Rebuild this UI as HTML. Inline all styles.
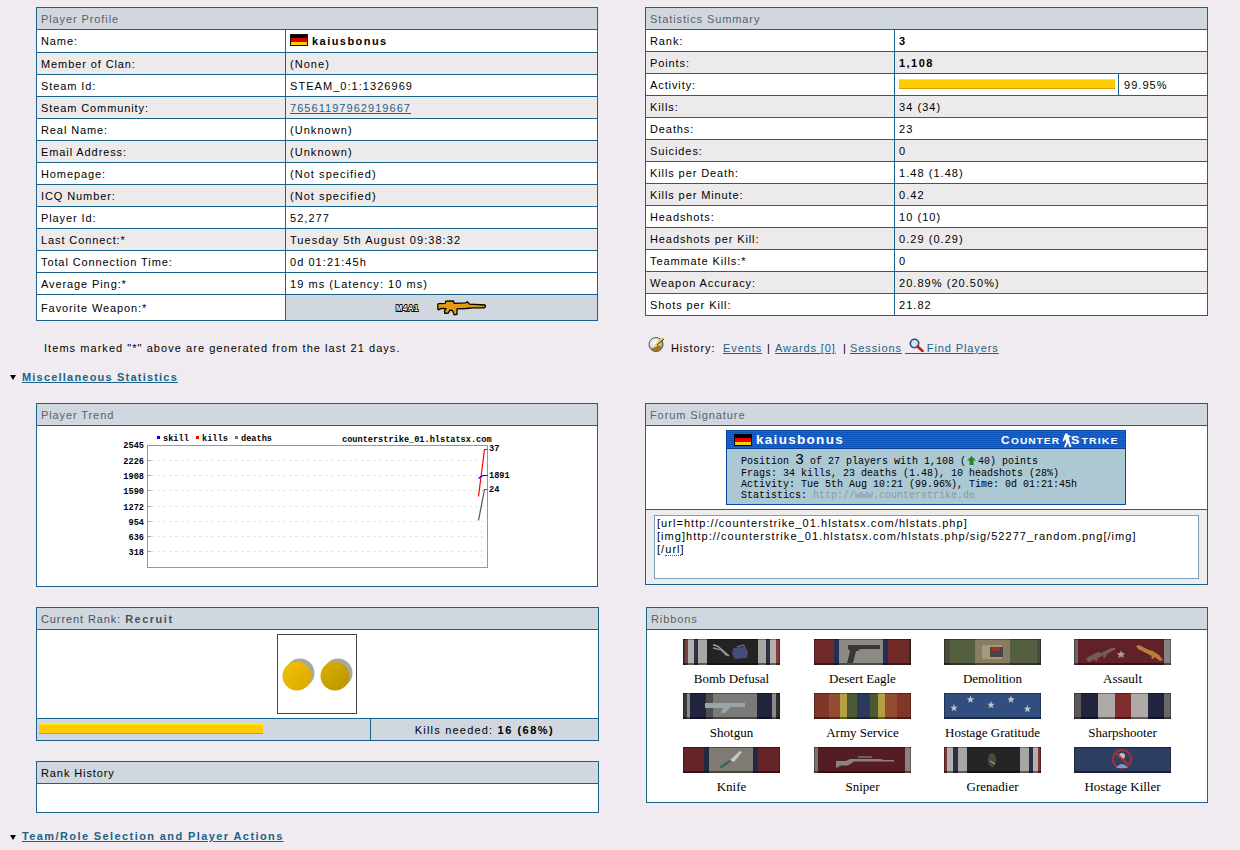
<!DOCTYPE html>
<html><head><meta charset="utf-8">
<style>
*{box-sizing:border-box;margin:0;padding:0}
html,body{width:1240px;height:850px;overflow:hidden}
body{background:#EFEBF0;font-family:"Liberation Sans",sans-serif;font-size:11px;color:#000;position:relative;letter-spacing:0.9px}
.p{position:absolute;border:1px solid #1B6288;background:#fff}
.hd{height:22px;background:#D0D7DE;color:#5A6168;padding-left:4px;padding-top:1px;line-height:21px;border-bottom:1px solid #1B6288}
.r{display:flex;border-bottom:1px solid #1B6288;line-height:21px;height:22px}
.r>div{padding-top:1px}
.r:last-child{border-bottom:0}
.g{background:#EDEAEC}
.c1{width:249px;border-right:1px solid #1B6288;padding-left:4px;flex:none}
.c2{flex:1;padding-left:4px;position:relative;letter-spacing:1.05px}
.rp .c1{width:249px}
a{color:#1B6288;text-decoration:underline}
b{font-weight:bold;letter-spacing:1.45px}
.abs{position:absolute;white-space:nowrap}
.tri{position:absolute;width:0;height:0;border-left:3.5px solid transparent;border-right:3.5px solid transparent;border-top:5px solid #000}
.ch{font-family:"Liberation Mono",monospace;font-weight:bold;font-size:8.6px;letter-spacing:0;line-height:10px;color:#000}
.yl{right:1096px;text-align:right}
.sig{background:#ACC9D3;border:1px solid #0D47A0;overflow:hidden}
.sigh{position:absolute;left:0;top:0;width:100%;height:18px;background:repeating-linear-gradient(#1766D6 0 1px,#0D55BE 1px 2px);border-bottom:1px solid #0A3F90}
.cslogo{color:#fff;font-weight:bold;font-size:12px;letter-spacing:0.3px;line-height:12px;font-style:normal}
.cslogo small{font-size:9px}
.sigt{font-family:"Liberation Mono",monospace;font-size:10px;letter-spacing:0;line-height:11px;color:#000}
.ta{background:#fff;border:1px solid #7F9DB9;font-size:11px;letter-spacing:1.05px;line-height:13px;padding:1px 0 0 2px}
.rib{position:absolute;width:97px;height:26px;box-shadow:inset 0 -2px 0 rgba(0,0,0,0.45),inset 0 1px 0 rgba(0,0,0,0.35),inset 1px 0 0 rgba(0,0,0,0.3),inset -1px 0 0 rgba(0,0,0,0.3)}
.rib svg{position:absolute;left:0;top:0}
.rib{filter:saturate(0.85)}
.rl{position:absolute;width:157px;text-align:center;font-family:"Liberation Serif",serif;font-size:13px;letter-spacing:0;line-height:15px;color:#000}
.sec{position:absolute;font-weight:bold;letter-spacing:1.2px;color:#1B6288;text-decoration:underline}
</style></head><body>

<!-- Player Profile -->
<div class="p" style="left:36px;top:7px;width:562px;height:314px">
  <div class="hd">Player Profile</div>
  <div class="r" style="height:23px;line-height:22px"><div class="c1" style="padding-top:0">Name:</div><div class="c2" style="padding-top:0"><span style="display:inline-block;width:18px;height:12px;vertical-align:-1px;margin-right:4px;background:linear-gradient(#000 0 33%,#D00 33% 66%,#FC0 66%);border:1px solid #111"></span><b>kaiusbonus</b></div></div>
  <div class="r g"><div class="c1">Member of Clan:</div><div class="c2">(None)</div></div>
  <div class="r"><div class="c1">Steam Id:</div><div class="c2">STEAM_0:1:1326969</div></div>
  <div class="r g"><div class="c1">Steam Community:</div><div class="c2"><a>76561197962919667</a></div></div>
  <div class="r"><div class="c1">Real Name:</div><div class="c2">(Unknown)</div></div>
  <div class="r g"><div class="c1">Email Address:</div><div class="c2">(Unknown)</div></div>
  <div class="r"><div class="c1">Homepage:</div><div class="c2">(Not specified)</div></div>
  <div class="r g"><div class="c1">ICQ Number:</div><div class="c2">(Not specified)</div></div>
  <div class="r"><div class="c1">Player Id:</div><div class="c2">52,277</div></div>
  <div class="r g"><div class="c1">Last Connect:*</div><div class="c2">Tuesday 5th August 09:38:32</div></div>
  <div class="r"><div class="c1">Total Connection Time:</div><div class="c2">0d 01:21:45h</div></div>
  <div class="r"><div class="c1">Average Ping:*</div><div class="c2">19 ms (Latency: 10 ms)</div></div>
  <div class="r" style="height:25px;line-height:25px"><div class="c1">Favorite Weapon:*</div><div class="c2" style="background:#D0D7DE;padding-top:0"><svg style="position:absolute;left:108px;top:0" width="30" height="22" viewBox="0 0 30 22"><text x="2" y="16" font-family="Liberation Sans" font-weight="bold" font-size="9.5" textLength="23" lengthAdjust="spacingAndGlyphs" fill="#fff" stroke="#000" stroke-width="2.2" paint-order="stroke" stroke-linejoin="round">M4A1</text></svg><svg style="position:absolute;left:148px;top:1px" width="56" height="24" viewBox="0 0 56 24"><path d="M3.8 8.3 L4.4 7.6 L11.2 7.4 L11.8 5.1 L19.4 4.9 L20.4 7.4 L31.6 6.9 L33.4 5.7 L35.4 8.1 L51 9 L51.4 10.4 L50.6 11.8 L39.3 11.8 L31.6 12.5 L23 12.9 L23 18.4 L20.2 18.8 L18.3 14.5 L15.9 14.1 L14.4 17 L10.8 17.4 L10.4 15.4 L12 12.6 L6.8 12.5 L4.6 13.9 L3.8 13 Z" fill="#E39A10" stroke="#000" stroke-width="1.3" stroke-linejoin="round"/></svg></div></div>
</div>

<!-- Statistics Summary -->
<div class="p rp" style="left:645px;top:7px;width:563px;height:309px">
  <div class="hd">Statistics Summary</div>
  <div class="r"><div class="c1">Rank:</div><div class="c2"><b>3</b></div></div>
  <div class="r g"><div class="c1">Points:</div><div class="c2"><b>1,108</b></div></div>
  <div class="r"><div class="c1">Activity:</div><div class="c2" style="padding:0;display:flex"><div style="width:224px;border-right:1px solid #1B6288;position:relative"><div style="position:absolute;left:4px;top:5px;width:216px;height:10px;background:linear-gradient(#FFEC00 0 1px,#FFCC00 1px);border-bottom:1px solid #D9A000"></div></div><div style="padding-left:5px;padding-top:1px">99.95%</div></div></div>
  <div class="r g"><div class="c1">Kills:</div><div class="c2">34 (34)</div></div>
  <div class="r"><div class="c1">Deaths:</div><div class="c2">23</div></div>
  <div class="r g"><div class="c1">Suicides:</div><div class="c2">0</div></div>
  <div class="r"><div class="c1">Kills per Death:</div><div class="c2">1.48 (1.48)</div></div>
  <div class="r g"><div class="c1">Kills per Minute:</div><div class="c2">0.42</div></div>
  <div class="r"><div class="c1">Headshots:</div><div class="c2">10 (10)</div></div>
  <div class="r g"><div class="c1">Headshots per Kill:</div><div class="c2">0.29 (0.29)</div></div>
  <div class="r"><div class="c1">Teammate Kills:*</div><div class="c2">0</div></div>
  <div class="r g"><div class="c1">Weapon Accuracy:</div><div class="c2">20.89% (20.50%)</div></div>
  <div class="r"><div class="c1">Shots per Kill:</div><div class="c2">21.82</div></div>
</div>

<div class="abs" style="left:44px;top:342px;letter-spacing:1.05px">Items marked "*" above are generated from the last 21 days.</div>

<svg class="abs" style="left:648px;top:336px" width="17" height="16" viewBox="0 0 17 16">
  <defs><radialGradient id="hg" cx="0.4" cy="0.35" r="0.7"><stop offset="0" stop-color="#fff"/><stop offset="0.5" stop-color="#ddd"/><stop offset="1" stop-color="#777"/></radialGradient></defs>
  <circle cx="8" cy="8.5" r="7" fill="url(#hg)" stroke="#333" stroke-width="0.8"/>
  <path d="M3 13 a7 7 0 0 0 11 -1 l-3 -3 z" fill="#A07820"/>
  <path d="M7 10 L15 2" stroke="#F0D020" stroke-width="2"/>
  <path d="M9 9 L16 3" stroke="#222" stroke-width="1"/>
</svg>
<div class="abs" style="left:671px;top:342px">History:</div>
<div class="abs" style="left:723px;top:342px"><a>Events</a></div>
<div class="abs" style="left:767px;top:342px">|</div>
<div class="abs" style="left:775px;top:342px"><a>Awards [0]</a></div>
<div class="abs" style="left:843px;top:342px">|</div>
<div class="abs" style="left:850px;top:342px"><a>Sessions</a></div>
<div class="abs" style="left:905px;top:342px"><a><span style="letter-spacing:1.3px">&nbsp;&nbsp;&nbsp;&nbsp;&nbsp;</span>Find Players</a></div>
<svg class="abs" style="left:909px;top:338px" width="15" height="14" viewBox="0 0 15 14">
  <circle cx="5.5" cy="5.5" r="4.2" fill="#CFE6F5" stroke="#2A4A8A" stroke-width="1.6"/>
  <path d="M8.5 8.5 L13.5 13" stroke="#C02020" stroke-width="2.8" stroke-linecap="round"/>
</svg>

<div class="tri" style="left:10px;top:375px"></div>
<div class="sec" style="left:22px;top:371px">Miscellaneous Statistics</div>

<!-- Player Trend -->
<div class="p" style="left:36px;top:403px;width:562px;height:184px">
  <div class="hd">Player Trend</div>
</div>

<!-- chart -->
<svg class="abs" style="left:0;top:0" width="600" height="600" viewBox="0 0 600 600">
  <g stroke="#E6E6E6" stroke-width="1" stroke-dasharray="3,3">
    <line x1="151" y1="460.5" x2="487" y2="460.5"/>
    <line x1="151" y1="475.5" x2="487" y2="475.5"/>
    <line x1="151" y1="490.5" x2="487" y2="490.5"/>
    <line x1="151" y1="506.5" x2="487" y2="506.5"/>
    <line x1="151" y1="521.5" x2="487" y2="521.5"/>
    <line x1="151" y1="536.5" x2="487" y2="536.5"/>
    <line x1="151" y1="551.5" x2="487" y2="551.5"/>
    <line x1="481.5" y1="525" x2="481.5" y2="567"/>
  </g>
  <g stroke="#9AA5A5" stroke-width="1">
    <line x1="147" y1="460.5" x2="151" y2="460.5"/>
    <line x1="147" y1="475.5" x2="151" y2="475.5"/>
    <line x1="147" y1="490.5" x2="151" y2="490.5"/>
    <line x1="147" y1="506.5" x2="151" y2="506.5"/>
    <line x1="147" y1="521.5" x2="151" y2="521.5"/>
    <line x1="147" y1="536.5" x2="151" y2="536.5"/>
    <line x1="147" y1="551.5" x2="151" y2="551.5"/>
  </g>
  <rect x="147.5" y="445.5" width="340" height="122" fill="none" stroke="#8E9B9B"/>
  <polyline points="478.5,496.5 484.5,449.5 487.5,449.5" fill="none" stroke="#FF0000" stroke-width="1.2"/>
  <polyline points="478.5,478.5 481,476.5 483.5,475.5 487.5,475.5" fill="none" stroke="#0000FF" stroke-width="1.2"/>
  <polyline points="478.5,520.5 484.5,489.5 487.5,489.5" fill="none" stroke="#555" stroke-width="1.2"/>
  <rect x="157" y="436" width="3" height="3" fill="#0000FF"/>
  <rect x="196" y="436" width="3" height="3" fill="#FF0000"/>
  <rect x="235" y="436" width="3" height="3" fill="#777"/>
</svg>
<div class="abs ch" style="left:163px;top:434px">skill</div>
<div class="abs ch" style="left:202px;top:434px">kills</div>
<div class="abs ch" style="left:241px;top:434px">deaths</div>
<div class="abs ch" style="left:342px;top:435px">counterstrike_01.hlstatsx.com</div>
<div class="abs ch yl" style="top:441px">2545</div>
<div class="abs ch yl" style="top:457px">2226</div>
<div class="abs ch yl" style="top:472px">1908</div>
<div class="abs ch yl" style="top:487px">1590</div>
<div class="abs ch yl" style="top:503px">1272</div>
<div class="abs ch yl" style="top:518px">954</div>
<div class="abs ch yl" style="top:533px">636</div>
<div class="abs ch yl" style="top:548px">318</div>
<div class="abs ch" style="left:489px;top:444px">37</div>
<div class="abs ch" style="left:489px;top:471px">1891</div>
<div class="abs ch" style="left:489px;top:485px">24</div>

<!-- Forum Signature -->
<div class="p" style="left:645px;top:403px;width:563px;height:182px">
  <div class="hd">Forum Signature</div>
  <div style="height:84px;border-bottom:1px solid #1B6288;background:#fff"></div>
  <div style="height:74px;background:#EDEDED"></div>
</div>
<div class="abs sig" style="left:726px;top:430px;width:400px;height:75px">
  <div class="sigh"></div>
  <span style="position:absolute;left:7px;top:3px;width:18px;height:12px;background:linear-gradient(#000 0 33%,#E00 33% 66%,#FC0 66%);border:1px solid #000"></span>
  <div class="abs" style="left:29px;top:0px;color:#fff;font-weight:bold;font-size:13.5px;letter-spacing:1.3px;line-height:18px">kaiusbonus</div>
  <svg class="abs" style="left:274px;top:0.5px" width="122" height="17" viewBox="0 0 122 17">
    <g fill="#fff" font-family="Liberation Sans" font-weight="bold">
      <text x="0" y="11.5" font-size="10.5" textLength="9.5" lengthAdjust="spacingAndGlyphs">C</text>
      <text x="10" y="11.5" font-size="9" textLength="49" lengthAdjust="spacingAndGlyphs">OUNTER</text>
      <text x="70" y="11.5" font-size="10.5" textLength="9.5" lengthAdjust="spacingAndGlyphs">S</text>
      <text x="80.5" y="11.5" font-size="9" textLength="37" lengthAdjust="spacingAndGlyphs">TRIKE</text>
    </g>
    <path d="M64 2 l2 -1 l1 2 l4 1.5 l-3 0.5 l0.5 4 l2 6 l-2 0 l-1.5 -4 l-2.5 4.5 l-1.5 -0.5 l2 -5 l-0.5 -3 l-2 2.5 l-1 -0.5 z" fill="#fff"/>
  </svg>
  <div class="abs sigt" style="left:14px;top:24px">Position <span style="font-size:15px;letter-spacing:0">3</span> of 27 players with 1,108 (<svg style="display:inline-block;vertical-align:-1px;margin:0 2px 0 1px" width="9" height="9" viewBox="0 0 9 9"><path d="M4.5 0 L9 4.5 L6.5 4.5 L6.5 9 L2.5 9 L2.5 4.5 L0 4.5 Z" fill="#1E8A1E"/></svg>40) points</div>
  <div class="abs sigt" style="left:14px;top:37px">Frags: 34 kills, 23 deaths (1.48), 10 headshots (28%)</div>
  <div class="abs sigt" style="left:14px;top:48px">Activity: Tue 5th Aug 10:21 (99.96%), Time: 0d 01:21:45h</div>
  <div class="abs sigt" style="left:14px;top:59px">Statistics: <span style="color:#8A9AA0">http://www.counterstrike.de</span></div>
</div>
<div class="abs ta" style="left:654px;top:515px;width:545px;height:64px">[url=http://counterstrike_01.hlstatsx.com/hlstats.php]<br>[img]http://counterstrike_01.hlstatsx.com/hlstats.php/sig/52277_random.png[/img]<br>[/<span style="border-bottom:1px dotted #E02020">url</span>]</div>

<!-- Current Rank -->
<div class="p" style="left:36px;top:607px;width:563px;height:134px">
  <div class="hd" style="color:#4A5158">Current Rank: <b style="letter-spacing:1.5px">Recruit</b></div>
  <div style="height:89px;border-bottom:1px solid #1B6288;background:#fff;position:relative">
    <div style="position:absolute;left:240px;top:4px;width:80px;height:80px;border:1px solid #444;background:#fff"></div>
  </div>
  <div style="height:21px;background:#D0D7DE;display:flex">
    <div style="width:334px;border-right:1px solid #1B6288;position:relative"><div style="position:absolute;left:2px;top:5px;width:224px;height:10px;background:linear-gradient(#FFEC00 0 1px,#FFCC00 1px);border-bottom:1px solid #D9A000"></div></div>
    <div style="flex:1;text-align:center;line-height:21px;padding-top:1px;letter-spacing:1.2px">Kills needed: <b style="letter-spacing:1.5px">16 (68%)</b></div>
  </div>
</div>
<svg class="abs" style="left:277px;top:634px" width="80" height="80" viewBox="0 0 80 80">
  <defs>
    <linearGradient id="cg1" x1="0" y1="0" x2="1" y2="1"><stop offset="0" stop-color="#F2C200"/><stop offset="1" stop-color="#D9A800"/></linearGradient>
    <linearGradient id="cg2" x1="0" y1="0" x2="1" y2="1"><stop offset="0" stop-color="#D8B000"/><stop offset="1" stop-color="#B89400"/></linearGradient>
  </defs>
  <circle cx="23" cy="39" r="14.5" fill="#8A8A8E" opacity="0.75"/>
  <circle cx="20" cy="42" r="14.5" fill="url(#cg1)"/>
  <circle cx="61" cy="39" r="14.5" fill="#8A8A8E" opacity="0.75"/>
  <circle cx="58" cy="42" r="14.5" fill="url(#cg2)"/>
</svg>

<!-- Ribbons -->
<div class="p" style="left:646px;top:607px;width:562px;height:196px">
  <div class="hd">Ribbons</div>
</div>
<div class="rib" style="left:683px;top:639px;background:linear-gradient(90deg,#3a3434 0% 2%,#8a3a3a 2% 5%,#b4b0ae 5% 11%,#2c3048 11% 15%,#a8a6a4 15% 25%,#242222 25% 77%,#a8a6a4 77% 86%,#2c3048 86% 90%,#b4b0ae 90% 96%,#8a3a3a 96% 100%)"><svg width="97" height="26" viewBox="0 0 97 26"><path d="M30 6 q4 0 8 4 l8 7" stroke="#a0a0a8" stroke-width="1.6" fill="none"/><path d="M30 9 q5 1 8 2 l6 6" stroke="#8a8a92" stroke-width="1.3" fill="none"/><path d="M50 9 l12 -1 l3 4 l-1 7 l-12 1 l-3 -5 z" fill="#3e4e7a"/><path d="M54 8 l6 -2 l2 2" stroke="#5a6a92" stroke-width="1.5" fill="none"/></svg></div>
<div class="rl" style="left:653px;top:671px">Bomb Defusal</div>
<div class="rib" style="left:814px;top:639px;background:linear-gradient(90deg,#7a2626 0% 21%,#1f2f5e 21% 26%,#8e8a84 26% 71%,#1f2f5e 71% 76%,#7a2626 76% 98%,#3a2a2a 98% 100%)"><svg width="97" height="26" viewBox="0 0 97 26"><path d="M34 6 h32 v4 h-20 l-2 2 h-2 l-3 12 h-6 l3 -12 l-2 -2 z" fill="#3a3836"/></svg></div>
<div class="rl" style="left:784px;top:671px">Desert Eagle</div>
<div class="rib" style="left:944px;top:639px;background:linear-gradient(90deg,#4a4a3c 0% 6%,#53603a 6% 32%,#8a7c5e 32% 68%,#53603a 68% 96%,#4a4a3c 96% 100%)"><svg width="97" height="26" viewBox="0 0 97 26"><rect x="38" y="6" width="20" height="14" fill="#a89878"/><rect x="46" y="8" width="13" height="10" fill="#4a4448"/><rect x="48" y="8" width="8" height="4" fill="#a03030"/></svg></div>
<div class="rl" style="left:914px;top:671px">Demolition</div>
<div class="rib" style="left:1074px;top:639px;background:linear-gradient(90deg,#6e6464 0% 4%,#6a1f28 4% 93%,#8a8282 93% 100%)"><svg width="97" height="26" viewBox="0 0 97 26"><path d="M12 21 l2 -3 l10 -5 l3 1 l10 -5 l4 0 l1 1 l-9 5 l-2 4 l-2 0 l1 -3 l-6 3 l-1 3 l-2 0 l0 -2 l-6 3 z" fill="#7a5a52"/><path d="M47 11.5 l1.3 2.6 l2.9 0.2 l-2.2 1.9 l0.8 2.8 l-2.8 -1.6 l-2.8 1.6 l0.8 -2.8 l-2.2 -1.9 l2.9 -0.2 z" fill="#a898a0"/><path d="M62 7 l3 -1 l10 5 l4 1 l6 4 l4 5 l-3 1 l-5 -4 l-2 2 l-2 -1 l1 -2 l-4 -2 l-10 -5 z" fill="#c8782a"/></svg></div>
<div class="rl" style="left:1044px;top:671px">Assault</div>
<div class="rib" style="left:683px;top:693px;background:linear-gradient(90deg,#3a3a3e 0% 4%,#8a8a8a 4% 7%,#1f2440 7% 24%,#4e4e52 24% 31%,#7c7a78 31% 76%,#1f2440 76% 92%,#8a8a8a 92% 96%,#2e2e32 96% 100%)"><svg width="97" height="26" viewBox="0 0 97 26"><path d="M22 10 h40 v4 h-14 l-6 6 h-4 l2 -5 h-18 z" fill="#9aa4a8"/></svg></div>
<div class="rl" style="left:653px;top:725px">Shotgun</div>
<div class="rib" style="left:814px;top:693px;background:linear-gradient(90deg,#8a3424 0% 15%,#a04a2c 15% 27%,#b8a034 27% 34%,#4a5a30 34% 44%,#283a62 44% 58%,#4a5a30 58% 66%,#b8a034 66% 73%,#a04a2c 73% 86%,#8a3424 86% 100%)"><svg width="97" height="26" viewBox="0 0 97 26"></svg></div>
<div class="rl" style="left:784px;top:725px">Army Service</div>
<div class="rib" style="left:944px;top:693px;background:linear-gradient(90deg,#2e4e88 0% 100%)"><svg width="97" height="26" viewBox="0 0 97 26"><g fill="#c0c4cc"><polygon points="26.50,2.60 27.46,5.17 30.21,5.29 28.06,7.01 28.79,9.66 26.50,8.14 24.21,9.66 24.94,7.01 22.79,5.29 25.54,5.17"/><polygon points="10.00,11.10 10.96,13.67 13.71,13.79 11.56,15.51 12.29,18.16 10.00,16.64 7.71,18.16 8.44,15.51 6.29,13.79 9.04,13.67"/><polygon points="47.00,8.10 47.96,10.67 50.71,10.79 48.56,12.51 49.29,15.16 47.00,13.64 44.71,15.16 45.44,12.51 43.29,10.79 46.04,10.67"/><polygon points="67.00,2.60 67.96,5.17 70.71,5.29 68.56,7.01 69.29,9.66 67.00,8.14 64.71,9.66 65.44,7.01 63.29,5.29 66.04,5.17"/><polygon points="83.50,12.10 84.46,14.67 87.21,14.79 85.06,16.51 85.79,19.16 83.50,17.64 81.21,19.16 81.94,16.51 79.79,14.79 82.54,14.67"/></g></svg></div>
<div class="rl" style="left:914px;top:725px">Hostage Gratitude</div>
<div class="rib" style="left:1074px;top:693px;background:linear-gradient(90deg,#5a5858 0% 7%,#1f2440 7% 25%,#b0aaa8 25% 42%,#8a2a2a 42% 59%,#b0aaa8 59% 76%,#1f2440 76% 93%,#6a6868 93% 100%)"><svg width="97" height="26" viewBox="0 0 97 26"></svg></div>
<div class="rl" style="left:1044px;top:725px">Sharpshooter</div>
<div class="rib" style="left:683px;top:747px;background:linear-gradient(90deg,#6e2226 0% 22%,#1e2a48 22% 27%,#807a72 27% 72%,#1e2a48 72% 77%,#6e2226 77% 100%)"><svg width="97" height="26" viewBox="0 0 97 26"><path d="M36 20 l10 -7 l3 1 l-10 7 z" fill="#2e6a58"/><path d="M47 13 l10 -9 l2 1 l-8 10 z" fill="#c8c8c0"/></svg></div>
<div class="rl" style="left:653px;top:779px">Knife</div>
<div class="rib" style="left:814px;top:747px;background:linear-gradient(90deg,#7a7272 0% 4%,#5e1a22 4% 94%,#8a8282 94% 100%)"><svg width="97" height="26" viewBox="0 0 97 26"><path d="M22 14 h10 l4 -2 h30 l4 1 h10 v1.5 h-40 l-6 4 h-8 l-2 2 h-2 z" fill="#8a8282"/><rect x="44" y="9" width="14" height="2" fill="#6a6464"/></svg></div>
<div class="rl" style="left:784px;top:779px">Sniper</div>
<div class="rib" style="left:944px;top:747px;background:linear-gradient(90deg,#8a3030 0% 3%,#b4b0ae 3% 9%,#2c3048 9% 14%,#a8a6a4 14% 24%,#262424 24% 78%,#a8a6a4 78% 88%,#2c3048 88% 92%,#b4b0ae 92% 97%,#8a3030 97% 100%)"><svg width="97" height="26" viewBox="0 0 97 26"><ellipse cx="48" cy="13" rx="4" ry="7" fill="#4a4a44"/><path d="M46 14 l5 3" stroke="#b8c030" stroke-width="1"/></svg></div>
<div class="rl" style="left:914px;top:779px">Grenadier</div>
<div class="rib" style="left:1074px;top:747px;background:linear-gradient(90deg,#2a3e68 0% 100%)"><svg width="97" height="26" viewBox="0 0 97 26"><circle cx="48" cy="12" r="9" fill="none" stroke="#b03038" stroke-width="2"/><circle cx="48" cy="9" r="3" fill="#d8b8a8"/><path d="M42 21 q6 -8 12 0 z" fill="#7a9ac8"/><path d="M42 6 l12 12" stroke="#b03038" stroke-width="2"/></svg></div>
<div class="rl" style="left:1044px;top:779px">Hostage Killer</div>

<!-- Rank History -->
<div class="p" style="left:36px;top:761px;width:563px;height:52px">
  <div class="hd" style="color:#000">Rank History</div>
</div>

<div class="tri" style="left:10px;top:835px"></div>
<div class="sec" style="left:22px;top:830px;letter-spacing:1.4px">Team/Role Selection and Player Actions</div>

</body></html>
